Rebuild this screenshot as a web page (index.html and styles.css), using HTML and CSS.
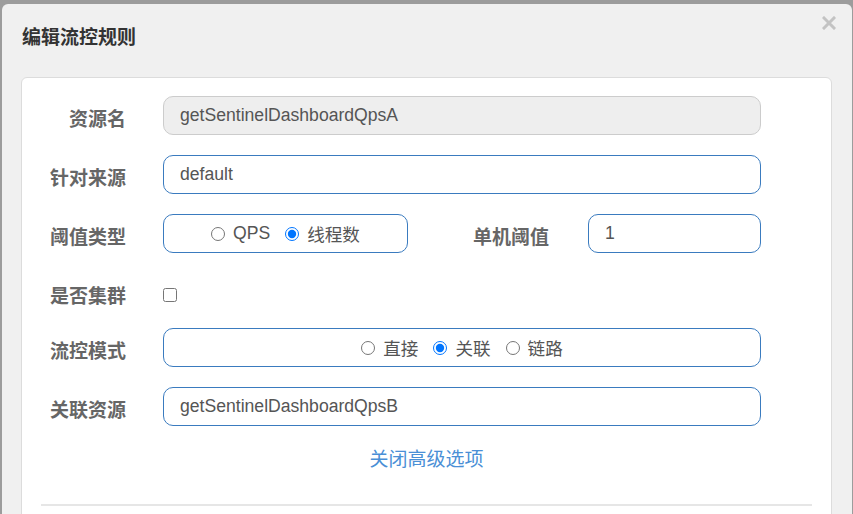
FILE: index.html
```html
<!DOCTYPE html>
<html lang="zh-CN">

<head>
    <meta charset="UTF-8">
    <meta name="viewport" content="width=device-width, initial-scale=1.0">
    <title>编辑流控规则</title>
    <link rel="stylesheet" href="styles.css">
</head>

<body>
    <div class="dialog">
        <div class="dialog-header">
            <h3 class="dialog-title">编辑流控规则</h3>
            <span class="close-btn">
                <svg width="14" height="14" viewBox="0 0 14 14">
                    <path d="M2 2 L12 12 M12 2 L2 12" stroke="#c3c3c3" stroke-width="3" stroke-linecap="square" fill="none"/>
                </svg>
            </span>
        </div>

        <div class="card">
            <div class="form-row">
                <label class="form-label">资源名</label>
                <input class="form-input" type="text" value="getSentinelDashboardQpsA" disabled>
            </div>

            <div class="form-row">
                <label class="form-label">针对来源</label>
                <input class="form-input" type="text" value="default">
            </div>

            <div class="form-row">
                <label class="form-label">阈值类型</label>
                <div class="radio-box radio-box-small">
                    <label class="radio"><input type="radio" name="grade">QPS</label>
                    <label class="radio"><input type="radio" name="grade" checked>线程数</label>
                </div>
                <label class="form-label form-label-inline">单机阈值</label>
                <input class="form-input form-input-small" type="text" value="1">
            </div>

            <div class="form-row form-row-check">
                <label class="form-label">是否集群</label>
                <input class="checkbox" type="checkbox">
            </div>

            <div class="form-row">
                <label class="form-label">流控模式</label>
                <div class="radio-box">
                    <label class="radio"><input type="radio" name="strategy">直接</label>
                    <label class="radio"><input type="radio" name="strategy" checked>关联</label>
                    <label class="radio"><input type="radio" name="strategy">链路</label>
                </div>
            </div>

            <div class="form-row">
                <label class="form-label">关联资源</label>
                <input class="form-input" type="text" value="getSentinelDashboardQpsB">
            </div>

            <p class="toggle-link">关闭高级选项</p>

            <hr class="divider">
        </div>
    </div>
</body>

</html>
```

FILE: styles.css
```css
html, body {
    height: 100%;
}

body {
    margin: 0;
    background-color: #9c9c9c;
    font-family: "Liberation Sans", "Noto Sans CJK SC", sans-serif;
    overflow: hidden;
}

.dialog {
    position: relative;
    margin: 4px 1px 0 2px;
    height: 600px;
    background-color: #f0f0f0;
    border-radius: 6px 6px 0 0;
}

.dialog-header {
    padding: 21px 20px 26px 20px;
}

.dialog-title {
    margin: 0;
    font-size: 19px;
    line-height: 26px;
    font-weight: bold;
    color: #333;
}

.close-btn {
    position: absolute;
    top: 12px;
    right: 16px;
}

.card {
    margin: 0 20px 0 19px;
    padding: 18px 0 0 0;
    height: 560px;
    background-color: #ffffff;
    border: 1px solid #dcdcdc;
    border-radius: 6px;
}

.form-row {
    display: flex;
    align-items: center;
    margin-bottom: 20px;
    padding-right: 70px;
}

.form-label {
    width: 104px;
    flex-shrink: 0;
    margin-right: 37px;
    padding-top: 3px;
    text-align: right;
    font-size: 19px;
    font-weight: bold;
    color: #666;
}

.form-label-inline {
    width: auto;
    flex: 1;
    margin-right: 39px;
}

.form-input {
    flex: 1;
    min-width: 0;
    height: 39px;
    box-sizing: border-box;
    padding: 0 16px;
    font-family: "Liberation Sans", "Noto Sans CJK SC", sans-serif;
    font-size: 17.6px;
    color: #555;
    background-color: #fff;
    border: 1px solid #3a7bbf;
    border-radius: 10px;
    outline: none;
}

.form-input:disabled {
    background-color: #eeeeee;
    border-color: #cccccc;
    color: #555;
}

.form-input-small {
    flex: none;
    width: 173px;
}

.radio-box {
    flex: 1;
    height: 39px;
    box-sizing: border-box;
    display: flex;
    align-items: center;
    justify-content: center;
    gap: 15px;
    border: 1px solid #3a7bbf;
    border-radius: 10px;
}

.radio-box-small {
    flex: none;
    width: 245px;
}

.radio {
    display: flex;
    align-items: center;
    font-size: 17.6px;
    color: #555;
}

.radio input {
    margin: 0 8px 0 0;
    width: 14px;
    height: 14px;
}

.form-row-check {
    height: 27px;
    padding-top: 8px;
}

.form-row-check .form-label {
    padding-top: 0;
}

.checkbox {
    margin: 0;
    width: 14px;
    height: 14px;
}

.toggle-link {
    margin: 21px 0 0 0;
    text-align: center;
    font-size: 19px;
    line-height: 26px;
    color: #4a8fd6;
}

.divider {
    margin: 31px 19px 0 19px;
    border: none;
    border-top: 2px solid #e6e6e6;
}
```
